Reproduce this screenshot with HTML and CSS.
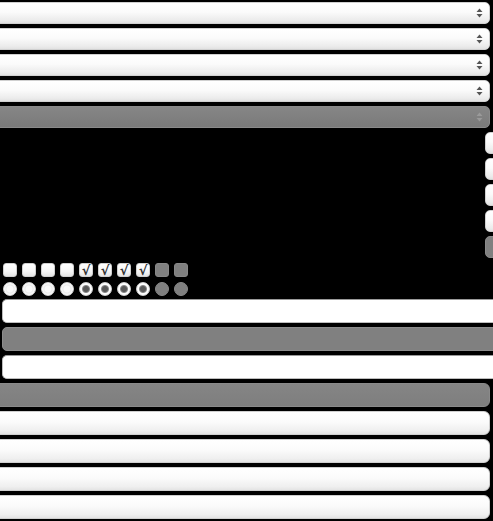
FILE: index.html
```html
<!DOCTYPE html>
<html>
<head>
<meta charset="utf-8">
<link rel="stylesheet" href="styles.css">
</head>
<body>
<div class="page">
  <div class="selects">
    <div class="select"><svg class="arrows" width="7" height="10" viewBox="0 0 7 10"><path d="M0.5 4 L3.5 0.5 L6.5 4 Z M0.5 6 L3.5 9.5 L6.5 6 Z"/></svg></div>
    <div class="select"><svg class="arrows" width="7" height="10" viewBox="0 0 7 10"><path d="M0.5 4 L3.5 0.5 L6.5 4 Z M0.5 6 L3.5 9.5 L6.5 6 Z"/></svg></div>
    <div class="select"><svg class="arrows" width="7" height="10" viewBox="0 0 7 10"><path d="M0.5 4 L3.5 0.5 L6.5 4 Z M0.5 6 L3.5 9.5 L6.5 6 Z"/></svg></div>
    <div class="select"><svg class="arrows" width="7" height="10" viewBox="0 0 7 10"><path d="M0.5 4 L3.5 0.5 L6.5 4 Z M0.5 6 L3.5 9.5 L6.5 6 Z"/></svg></div>
    <div class="select disabled"><svg class="arrows" width="7" height="10" viewBox="0 0 7 10"><path d="M0.5 4 L3.5 0.5 L6.5 4 Z M0.5 6 L3.5 9.5 L6.5 6 Z"/></svg></div>
  </div>
  <div class="buttons">
    <div class="btn"></div>
    <div class="btn"></div>
    <div class="btn"></div>
    <div class="btn"></div>
    <div class="btn disabled"></div>
  </div>
  <div class="checks">
    <span class="cb"></span><span class="cb"></span><span class="cb"></span><span class="cb"></span>
    <span class="cb on">√</span><span class="cb on">√</span><span class="cb on">√</span><span class="cb on">√</span>
    <span class="cb disabled"></span><span class="cb disabled"></span>
  </div>
  <div class="radios">
    <span class="rd"></span><span class="rd"></span><span class="rd"></span><span class="rd"></span>
    <span class="rd on"></span><span class="rd on"></span><span class="rd on"></span><span class="rd on"></span>
    <span class="rd disabled"></span><span class="rd disabled"></span>
  </div>
  <div class="inputs">
    <div class="field"></div>
    <div class="field disabled"></div>
    <div class="field"></div>
  </div>
  <div class="bars">
    <div class="bar disabled"></div>
    <div class="bar"></div>
    <div class="bar"></div>
    <div class="bar"></div>
    <div class="bar"></div>
  </div>
</div>
</body>
</html>
```
FILE: styles.css
```css
html, body {
  margin: 0;
  padding: 0;
  background: #000;
  overflow: hidden;
  font-family: "DejaVu Sans", sans-serif;
}
.page {
  width: 493px;
  height: 521px;
  overflow: hidden;
  display: flex;
  flex-direction: column;
}
.selects {
  display: flex;
  flex-direction: column;
  gap: 4px;
  padding-top: 2px;
}
.select {
  box-sizing: border-box;
  height: 22px;
  width: 510px;
  margin-left: -20px;
  border-radius: 5px;
  border: 1px solid #d0d0d0;
  background: linear-gradient(#ffffff, #fbfbfb 45%, #ececec 85%, #e2e2e2);
  display: flex;
  align-items: center;
  justify-content: flex-end;
  padding-right: 6px;
}
.select .arrows { fill: #555; }
.select.disabled {
  background: linear-gradient(#868686, #808080 50%, #7a7a7a);
  border-color: #8a8a8a;
}
.select.disabled .arrows { fill: #9a9a9a; }
.buttons {
  display: flex;
  flex-direction: column;
  gap: 4px;
  margin-top: 4px;
  padding-left: 485px;
}
.btn {
  box-sizing: border-box;
  height: 22px;
  width: 40px;
  border-radius: 5px;
  border: 1px solid #d0d0d0;
  background: linear-gradient(#ffffff, #fbfbfb 45%, #ececec 85%, #e2e2e2);
}
.btn.disabled {
  background: #808080;
  border-color: #8a8a8a;
}
.checks, .radios {
  display: flex;
  gap: 5px;
  padding-left: 3px;
  margin-top: 5px;
}
.cb {
  box-sizing: border-box;
  width: 14px;
  height: 14px;
  border-radius: 3px;
  border: 1px solid #cfcfcf;
  background: linear-gradient(#ffffff, #f6f6f6 60%, #e4e4e4);
  color: #333;
  font-size: 13px;
  line-height: 13px;
  text-align: center;
  font-weight: bold;
}
.cb.disabled {
  background: #808080;
  border-color: #888;
}
.rd {
  box-sizing: border-box;
  width: 14px;
  height: 14px;
  border-radius: 50%;
  border: 1px solid #d4d4d4;
  background: radial-gradient(circle, #fafafa 0, #fafafa 3px, #ececec 4px, #ffffff 6px);
}
.rd.on {
  background: radial-gradient(circle, #5a5a5a 0, #5a5a5a 2.5px, #8a8a8a 3.5px, #ffffff 4.5px);
}
.rd.disabled {
  background: #808080;
  border-color: #888;
}
.inputs {
  display: flex;
  flex-direction: column;
  gap: 4px;
  margin-top: 3px;
  padding-left: 2px;
}
.field {
  box-sizing: border-box;
  height: 24px;
  width: 520px;
  border-radius: 5px;
  border: 1px solid #bdbdbd;
  border-top-color: #9a9a9a;
  background: #fff;
}
.field.disabled {
  background: #808080;
  border-color: #8c8c8c;
}
.bars {
  display: flex;
  flex-direction: column;
  gap: 4px;
  margin-top: 4px;
}
.bar {
  box-sizing: border-box;
  height: 24px;
  width: 510px;
  margin-left: -20px;
  border-radius: 6px;
  border: 1px solid #cfcfcf;
  background: linear-gradient(#ffffff, #fbfbfb 45%, #efefef 85%, #e4e4e4);
}
.bar.disabled {
  background: linear-gradient(#858585, #7e7e7e);
  border-color: #8a8a8a;
}
```
